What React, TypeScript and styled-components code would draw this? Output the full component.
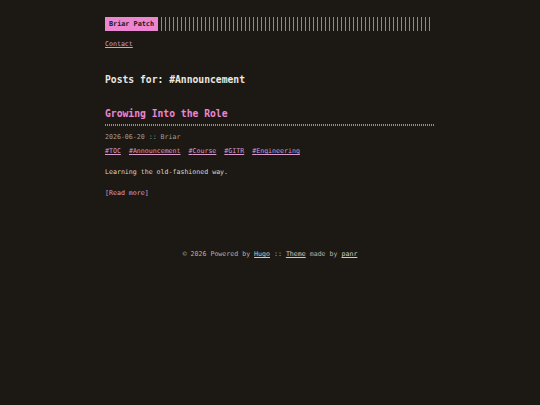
import React from 'react';
import styled, { createGlobalStyle } from 'styled-components';

const accent = '#ec86d0';
const link = '#d99ccb';

const GlobalStyle = createGlobalStyle`
  html, body {
    margin: 0;
    padding: 0;
    background: #1c1914;
  }
  body {
    font-family: "DejaVu Sans Mono", "Liberation Mono", monospace;
    color: #dcd6cc;
    font-size: 6.6px;
  }
`;

const Page = styled.div`
  width: 330px;
  margin: 0 auto;
  padding-top: 17px;
  min-height: 388px;
`;

const Header = styled.header`
  display: flex;
  align-items: center;
  gap: 3px;
`;

const Logo = styled.a`
  display: flex;
  align-items: center;
  height: 14px;
  padding: 0 4px;
  background: ${accent};
  color: #1c1914;
  font-weight: bold;
  font-size: 6.8px;
  text-decoration: none;
`;

const Stripes = styled.div`
  flex: 1;
  height: 14px;
  margin-right: 2px;
  background-image: linear-gradient(90deg, #d97cc2 0, #d97cc2 1px, transparent 1px);
  background-size: 4px 14px;
  background-repeat: repeat-x;
  opacity: 0.85;
`;

const Menu = styled.nav`
  margin-top: 9px;
  line-height: 9px;
`;

const Link = styled.a<{ muted?: boolean }>`
  color: ${({ muted }) => (muted ? '#cfc9bf' : link)};
  text-decoration: underline;
  text-underline-offset: 1px;
`;

const Heading = styled.h1`
  margin: 25px 0 0;
  font-size: 9.7px;
  line-height: 12px;
  font-weight: bold;
  color: #ece8e0;
`;

const Post = styled.article`
  margin-top: 22px;
`;

const PostTitle = styled.h2`
  margin: 0;
  font-size: 9.7px;
  line-height: 12px;
  font-weight: bold;
  color: ${accent};
`;

const Dots = styled.div`
  margin-top: 4px;
  height: 2px;
  background-image: linear-gradient(90deg, ${accent} 0, ${accent} 1px, transparent 1px);
  background-size: 2px 2px;
  opacity: 0.8;
`;

const Meta = styled.div`
  margin-top: 7px;
  line-height: 9px;
  color: #a39d93;
`;

const Tags = styled.div`
  margin-top: 5px;
  line-height: 9px;
  display: flex;
  gap: 8px;
`;

const Tag = styled.a`
  color: ${link};
  text-decoration: underline;
  text-underline-offset: 1px;
`;

const Content = styled.p`
  margin: 12px 0 0;
  line-height: 9px;
`;

const ReadMore = styled.a`
  display: inline-block;
  margin-top: 12px;
  line-height: 9px;
  color: ${link};
  text-decoration: none;
`;

const Footer = styled.footer`
  margin-top: 52px;
  text-align: center;
  line-height: 9px;
  color: #b6b0a6;
`;

const tags = ['TOC', 'Announcement', 'Course', 'GITR', 'Engineering'];

const App = () => {
  return (
    <>
      <GlobalStyle />
      <Page>
        <Header>
          <Logo>Briar Patch</Logo>
          <Stripes />
        </Header>
        <Menu>
          <Link>Contact</Link>
        </Menu>
        <Heading>Posts for: #Announcement</Heading>
        <Post>
          <PostTitle>Growing Into the Role</PostTitle>
          <Dots />
          <Meta>2026-06-20 :: Briar</Meta>
          <Tags>
            {tags.map((tag) => (
              <Tag key={tag}>#{tag}</Tag>
            ))}
          </Tags>
          <Content>Learning the old-fashioned way.</Content>
          <ReadMore>[Read more]</ReadMore>
        </Post>
        <Footer>
          © 2026 Powered by <Link muted>Hugo</Link> :: <Link muted>Theme</Link> made by{' '}
          <Link muted>panr</Link>
        </Footer>
      </Page>
    </>
  );
};

export default App;
